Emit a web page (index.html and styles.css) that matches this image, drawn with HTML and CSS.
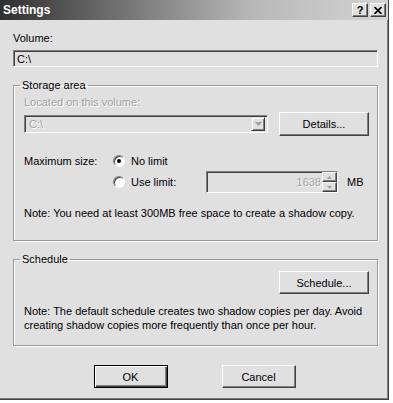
FILE: index.html
```html
<!DOCTYPE html>
<html lang="en">
<head>
  <meta charset="UTF-8">
  <title>Settings</title>
  <link rel="stylesheet" href="styles.css">
</head>
<body>
  <div class="window">
    <div class="titlebar">
      <span class="title">Settings</span>
      <div class="caption-buttons">
        <span class="cap-btn help">?</span>
        <span class="cap-btn close">
          <svg width="8" height="7" viewBox="0 0 8 7"><path d="M0.5 0 L7.5 7 M7.5 0 L0.5 7" stroke="#000" stroke-width="1.6"/></svg>
        </span>
      </div>
    </div>

    <div class="content">
      <div class="label">Volume:</div>
      <div class="field readonly">C:\</div>

      <fieldset class="group storage">
        <legend>Storage area</legend>
        <div class="label disabled">Located on this volume:</div>
        <div class="combo-row">
          <div class="combo field">
            <span class="disabled">C:\</span>
            <span class="combo-arrow">
              <svg width="7" height="4" viewBox="0 0 7 4"><path d="M0 0 H7 L3.5 4 Z" fill="#a0a0a0"/></svg>
            </span>
          </div>
          <button class="btn">Details...</button>
        </div>

        <div class="size-grid">
          <div class="size-label">Maximum size:</div>
          <label class="radio"><span class="dot checked"></span>No limit</label>
          <div></div>
          <div></div>
          <div></div>
          <label class="radio"><span class="dot"></span>Use limit:</label>
          <div class="spin field">
            <span class="disabled">1638</span>
            <span class="spin-btns">
              <span class="spin-btn"><svg width="5" height="3" viewBox="0 0 5 3"><path d="M0 3 H5 L2.5 0 Z" fill="#a0a0a0"/></svg></span>
              <span class="spin-btn"><svg width="5" height="3" viewBox="0 0 5 3"><path d="M0 0 H5 L2.5 3 Z" fill="#a0a0a0"/></svg></span>
            </span>
          </div>
          <div class="unit">MB</div>
        </div>

        <p class="note">Note: You need at least 300MB free space to create a shadow copy.</p>
      </fieldset>

      <fieldset class="group schedule">
        <legend>Schedule</legend>
        <div class="btn-row">
          <button class="btn">Schedule...</button>
        </div>
        <p class="note">Note: The default schedule creates two shadow copies per day. Avoid creating shadow copies more frequently than once per hour.</p>
      </fieldset>

      <div class="dialog-buttons">
        <button class="btn default">OK</button>
        <button class="btn">Cancel</button>
      </div>
    </div>
  </div>
</body>
</html>
```

FILE: styles.css
```css
body { margin: 0; background: #fff; font-family: "Liberation Sans", Arial, sans-serif; font-size: 11px; color: #000; }
.window { width: 388px; height: 399px; background: #e0e0e0; border-right: 1px solid #404040; border-bottom: 1px solid #404040; box-shadow: inset -1px -1px 0 #808080; }

.titlebar { height: 20px; display: flex; align-items: center; justify-content: space-between; padding: 0 2px 0 3px; background: linear-gradient(to right, #303030 0%, #707070 30%, #b8b8b8 65%, #d4d4d4 100%); }
.title { color: #fff; font-weight: bold; font-size: 12px; }
.caption-buttons { display: flex; gap: 2px; }
.cap-btn { width: 14px; height: 12px; display: flex; align-items: center; justify-content: center; background: #e0e0e0; border: 1px solid; border-color: #fff #404040 #404040 #fff; box-shadow: inset -1px -1px 0 #808080; font-weight: bold; font-size: 11px; line-height: 12px; }

.content { padding: 11px 10px 0 13px; }
.label { line-height: 14px; }
.disabled { color: #a0a0a0; text-shadow: 1px 1px 0 #fff; }

.field { box-sizing: border-box; height: 17px; margin-top: 5px; padding: 2px 3px; line-height: 13px; border: 1px solid; border-color: #808080 #fff #fff #808080; box-shadow: inset 1px 1px 0 #404040; background: #e0e0e0; }

.group { margin: 12px 0 0; border: 1px solid #999; box-shadow: inset 1px 1px 0 #fff, 1px 1px 0 #fff; padding: 3px 8px 20px 10px; }
.group legend { padding: 0 2px; margin-left: -4px; line-height: 13px; }

.combo-row { display: flex; align-items: center; gap: 11px; margin-top: 3px; }
.combo { flex: 0 0 244px; height: 18px; display: flex; justify-content: space-between; align-items: center; padding: 0 2px 0 4px; margin-top: 0; }
.combo-arrow { width: 14px; height: 14px; box-sizing: border-box; display: flex; align-items: center; justify-content: center; border: 1px solid; border-color: #e0e0e0 #404040 #404040 #e0e0e0; box-shadow: inset 1px 1px 0 #fff, inset -1px -1px 0 #808080; }

.btn { box-sizing: border-box; width: 90px; height: 24px; padding: 0; font-family: inherit; font-size: 11px; color: #000; background: #e0e0e0; border: 1px solid; border-color: #fff #404040 #404040 #fff; box-shadow: inset -1px -1px 0 #808080; }

.size-grid { display: grid; grid-template-columns: 89px 93px 141px auto; grid-template-rows: 20px 22px; align-items: center; margin-top: 15px; }
.radio { display: flex; align-items: center; gap: 6px; }
.dot { box-sizing: border-box; width: 12px; height: 12px; border-radius: 50%; background: #fff; border: 1px solid; border-color: #808080 #fff #fff #808080; box-shadow: inset 1px 1px 0 #404040; display: flex; align-items: center; justify-content: center; }
.dot.checked::after { content: ""; width: 4px; height: 4px; border-radius: 50%; background: #000; }
.spin { width: 132px; height: 22px; margin: 0; padding: 0 0 0 3px; display: flex; justify-content: flex-end; align-items: center; }
.spin .disabled { margin-right: 1px; }
.spin-btns { display: flex; flex-direction: column; height: 20px; }
.spin-btn { box-sizing: border-box; width: 15px; height: 10px; display: flex; align-items: center; justify-content: center; border: 1px solid; border-color: #fff #404040 #404040 #fff; box-shadow: inset -1px -1px 0 #808080; background: #e0e0e0; }
.unit { line-height: 14px; }

.note { margin: 13px 0 0; line-height: 14px; }

.schedule { padding-top: 5px; padding-bottom: 13px; }
.btn-row { display: flex; justify-content: flex-end; }
.schedule .btn { height: 23px; }
.schedule .note { margin-top: 10px; }

.dialog-buttons { display: flex; justify-content: center; gap: 54px; margin-top: 19px; padding-right: 2px; }
.dialog-buttons .btn { width: 74px; height: 23px; }
.btn.default { border: 1px solid #000; box-shadow: inset 1px 1px 0 #fff, inset -1px -1px 0 #404040, inset -2px -2px 0 #808080; }
```
